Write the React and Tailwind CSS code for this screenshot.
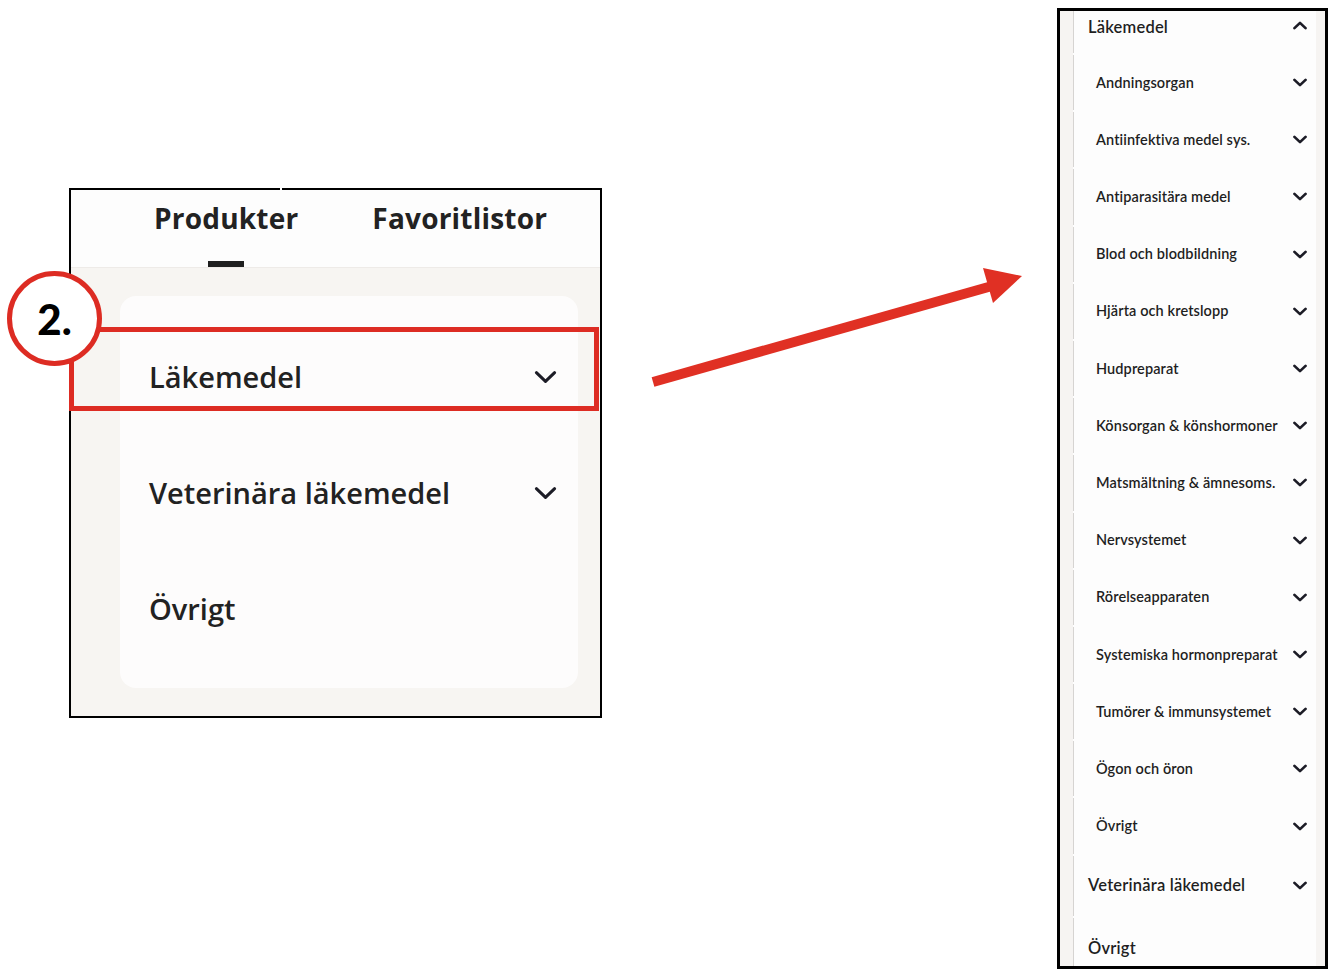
import React from "react";

const fontL = { fontFamily: "'Open Sans', 'Noto Sans', sans-serif" };
const fontR = { fontFamily: "Lato, 'Noto Sans', sans-serif" };

function Chevron({ up = false, className = "", sw = 3.2 }) {
  return (
    <svg viewBox="0 0 24 14" className={className} fill="none">
      <path
        d={up ? "M2.5 11.5 L12 2.5 L21.5 11.5" : "M2.5 2.5 L12 11.5 L21.5 2.5"}
        stroke="#1c1c26"
        strokeWidth={sw}
        strokeLinecap="round"
        strokeLinejoin="round"
      />
    </svg>
  );
}

const subs = [
  "Andningsorgan",
  "Antiinfektiva medel sys.",
  "Antiparasitära medel",
  "Blod och blodbildning",
  "Hjärta och kretslopp",
  "Hudpreparat",
  "Könsorgan & könshormoner",
  "Matsmältning & ämnesoms.",
  "Nervsystemet",
  "Rörelseapparaten",
  "Systemiska hormonpreparat",
  "Tumörer & immunsystemet",
  "Ögon och öron",
  "Övrigt",
];

function LeftPanel() {
  return (
    <div className="absolute left-[69px] top-[188px] w-[533px] h-[530px] border-2 border-black flex flex-col bg-[#f7f5f2]" style={fontL}>
      <div className="h-[78px] bg-[#fdfdfd] border-b border-[#eeebe8] flex pl-[83px] gap-[74px] text-[#222222]">
        <div className="flex flex-col items-center">
          <div className="h-[56px] flex items-center text-[28px] font-bold tracking-[0.2px]">Produkter</div>
          <div className="mt-[16px] w-[36px] h-[6px] bg-[#1f1f1f]"></div>
        </div>
        <div className="flex flex-col items-center">
          <div className="h-[56px] flex items-center text-[28px] font-bold tracking-[0.2px]">Favoritlistor</div>
        </div>
      </div>
      <div className="flex-1 pl-[49px] pr-[22px] pt-[28px] pb-[28px]">
        <div className="h-full bg-[#fdfcfc] rounded-[16px] pt-[23px] pl-[29px] pr-[21px] text-[#222222]">
          {[
            ["Läkemedel", true],
            ["Veterinära läkemedel", true],
            ["Övrigt", false],
          ].map(([t, c]) => (
            <div key={t} className="h-[116px] flex items-center justify-between">
              <span className="text-[29px] font-semibold">{t}</span>
              {c && <Chevron className="w-[23px] h-[14px]" />}
            </div>
          ))}
        </div>
      </div>
    </div>
  );
}

function RightPanel() {
  return (
    <div className="absolute left-[1057px] top-[8px] w-[271px] h-[961px] border-[3px] border-black flex bg-[#f6f4f2] overflow-hidden" style={fontR}>
      <div className="w-[13px] shrink-0"></div>
      <div className="flex-1 flex flex-col bg-[#fdfdfd] text-[#1f1f1f]">
        <div className="h-[42px] border-l border-[#d6d4d2] flex items-start justify-between pt-[4px] pl-[14px] pr-[9px]">
          <span className="text-[16.5px] font-semibold tracking-[0.2px]">Läkemedel</span>
          <Chevron up sw={4.6} className="w-[14px] h-[9px] mt-[6px]" />
        </div>
        {subs.map((s) => (
          <div key={s} className="h-[57.2px] pt-[2px]">
            <div className="h-full border-l border-[#d6d4d2] flex items-center justify-between pl-[22px] pr-[9px]">
              <span className="text-[14.5px] font-semibold tracking-[0.1px]">{s}</span>
              <Chevron sw={4.6} className="w-[14px] h-[9px]" />
            </div>
          </div>
        ))}
        <div className="h-[62px] pt-[2px]">
          <div className="h-full border-l border-[#d6d4d2] flex items-center justify-between pl-[14px] pr-[9px]">
            <span className="text-[16.5px] font-semibold tracking-[0.2px]">Veterinära läkemedel</span>
            <Chevron sw={4.6} className="w-[14px] h-[9px]" />
          </div>
        </div>
        <div className="flex-1 pt-[2px]">
          <div className="h-full border-l border-[#d6d4d2] pl-[14px] pt-[18px]">
            <span className="text-[16.5px] font-semibold tracking-[0.2px]">Övrigt</span>
          </div>
        </div>
      </div>
      <div className="w-[9px] shrink-0"></div>
    </div>
  );
}

export default function App() {
  return (
    <div className="relative w-[1334px] h-[980px] bg-white overflow-hidden">
      <LeftPanel />
      <div className="absolute left-[280px] top-[188px] w-[2px] h-[2px] bg-white"></div>
      <RightPanel />
      <svg className="absolute left-0 top-0 pointer-events-none" width="1334" height="980">
        <rect x="71.5" y="329.5" width="525" height="79" fill="none" stroke="#dd2c23" strokeWidth="5" />
        <line x1="653" y1="382" x2="992" y2="286" stroke="#e03024" strokeWidth="10" />
        <polygon points="983,268 1022,276 993,303" fill="#e03024" />
      </svg>
      <div className="absolute left-[7px] top-[271px] w-[95px] h-[95px] rounded-full border-[5px] border-[#dd2c23] bg-white flex items-center justify-center">
        <span className="text-[42px] font-black text-black leading-none" style={{ fontFamily: "Lato, 'Open Sans', sans-serif" }}>2.</span>
      </div>
    </div>
  );
}
